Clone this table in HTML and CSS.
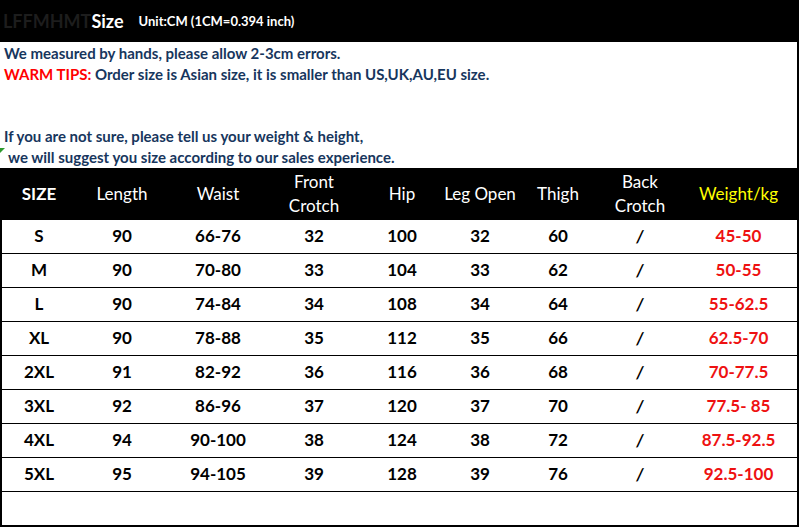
FILE: index.html
```html
<!DOCTYPE html>
<html>
<head>
<meta charset="utf-8">
<link rel="stylesheet" href="styles.css">
</head>
<body>
<div class="page">
  <div class="topbar">
    <span class="brand">LFFMHMT</span><span class="size-title">Size</span>
    <span class="unit">Unit:CM (1CM=0.394 inch)</span>
  </div>
  <div class="notes">
    <p class="note">We measured by hands, please allow 2-3cm errors.</p>
    <p class="note"><span class="warn">WARM TIPS:</span> Order size is Asian size, it is smaller than US,UK,AU,EU size.</p>
    <p class="note">&nbsp;</p>
    <p class="note">&nbsp;</p>
    <p class="note">If you are not sure, please tell us your weight &amp; height,</p>
    <p class="note indent"><span class="flag"></span>we will suggest you size according to our sales experience.</p>
  </div>
  <div class="table">
    <div class="row head">
      <div class="cell strong">SIZE</div>
      <div class="cell">Length</div>
      <div class="cell">Waist</div>
      <div class="cell">Front<br>Crotch</div>
      <div class="cell">Hip</div>
      <div class="cell">Leg Open</div>
      <div class="cell">Thigh</div>
      <div class="cell">Back<br>Crotch</div>
      <div class="cell yellow">Weight/kg</div>
    </div>
    <div class="row"><div class="cell">S</div><div class="cell">90</div><div class="cell">66-76</div><div class="cell">32</div><div class="cell">100</div><div class="cell">32</div><div class="cell">60</div><div class="cell slash">/</div><div class="cell red">45-50</div></div>
    <div class="row"><div class="cell">M</div><div class="cell">90</div><div class="cell">70-80</div><div class="cell">33</div><div class="cell">104</div><div class="cell">33</div><div class="cell">62</div><div class="cell slash">/</div><div class="cell red">50-55</div></div>
    <div class="row"><div class="cell">L</div><div class="cell">90</div><div class="cell">74-84</div><div class="cell">34</div><div class="cell">108</div><div class="cell">34</div><div class="cell">64</div><div class="cell slash">/</div><div class="cell red">55-62.5</div></div>
    <div class="row"><div class="cell">XL</div><div class="cell">90</div><div class="cell">78-88</div><div class="cell">35</div><div class="cell">112</div><div class="cell">35</div><div class="cell">66</div><div class="cell slash">/</div><div class="cell red">62.5-70</div></div>
    <div class="row"><div class="cell">2XL</div><div class="cell">91</div><div class="cell">82-92</div><div class="cell">36</div><div class="cell">116</div><div class="cell">36</div><div class="cell">68</div><div class="cell slash">/</div><div class="cell red">70-77.5</div></div>
    <div class="row"><div class="cell">3XL</div><div class="cell">92</div><div class="cell">86-96</div><div class="cell">37</div><div class="cell">120</div><div class="cell">37</div><div class="cell">70</div><div class="cell slash">/</div><div class="cell red">77.5- 85</div></div>
    <div class="row"><div class="cell">4XL</div><div class="cell">94</div><div class="cell">90-100</div><div class="cell">38</div><div class="cell">124</div><div class="cell">38</div><div class="cell">72</div><div class="cell slash">/</div><div class="cell red">87.5-92.5</div></div>
    <div class="row"><div class="cell">5XL</div><div class="cell">95</div><div class="cell">94-105</div><div class="cell">39</div><div class="cell">128</div><div class="cell">39</div><div class="cell">76</div><div class="cell slash">/</div><div class="cell red">92.5-100</div></div>
    <div class="row empty"></div>
  </div>
</div>
</body>
</html>
```
FILE: styles.css
```css
* { box-sizing: border-box; }
html, body { margin: 0; padding: 0; background: #fff; }
body { font-family: Lato, "Open Sans", sans-serif; }
.page { width: 799px; height: 527px; overflow: hidden; }

.topbar {
  height: 42px;
  background: #000;
  display: flex;
  align-items: center;
  padding-left: 3px;
  padding-bottom: 1px;
}
.brand { color: #1d1d1d; font-weight: 700; font-size: 18px; }
.size-title { color: #fff; font-weight: 700; font-size: 18px; }
.unit { color: #fff; font-weight: 700; font-size: 13px; margin-left: 15px; }

.notes {
  position: relative;
  height: 126px;
  border-right: 2px solid #000;
  padding: 1px 0 0 4px;
}
.note {
  position: relative;
  margin: 0;
  height: 20.8px;
  line-height: 20.8px;
  color: #17365d;
  font-weight: 700;
  font-size: 15px;
  white-space: nowrap;
}
.note.indent { padding-left: 4px; }
.warn { color: #ff0000; }
.flag {
  position: absolute;
  left: -4px;
  top: 1px;
  width: 0; height: 0;
  border-top: 5px solid #2e9a2e;
  border-right: 5px solid transparent;
}

.table {
  border-left: 2px solid #000;
  border-right: 2px solid #000;
  border-bottom: 2px solid #000;
  height: 359px;
}
.row {
  display: grid;
  grid-template-columns: 74px 92px 100px 92px 84px 72px 84px 80px 1fr;
  height: 34px;
  border-bottom: 1px solid #000;
  font-weight: 700;
  font-size: 17px;
  color: #000;
}
.row.empty { border-bottom: none; height: 33px; }
.cell {
  display: flex;
  align-items: center;
  justify-content: center;
  text-align: center;
  line-height: 24.5px;
}
.row.head {
  height: 52px;
  background: #000;
  color: #fff;
  font-weight: 400;
  border-bottom: none;
}
.head .strong { font-weight: 700; }
.yellow { color: #ffff00; }
.red { color: #ee1111; }
.slash { font-style: italic; }
```
